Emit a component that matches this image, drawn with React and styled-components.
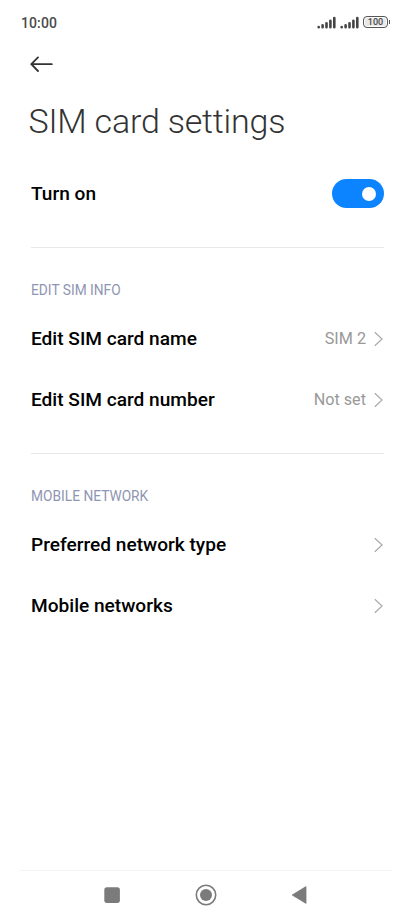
import React from "react";
import styled, { createGlobalStyle } from "styled-components";

const GlobalStyle = createGlobalStyle`
  * { box-sizing: border-box; }
  body { margin: 0; background: #fff; font-family: Roboto, sans-serif; }
`;

const Screen = styled.div`
  width: 414px;
  height: 920px;
  display: flex;
  flex-direction: column;
  background: #fff;
  overflow: hidden;
`;

const StatusBar = styled.header`
  height: 44px;
  padding: 0 24px 0 21px;
  display: flex;
  align-items: center;
  justify-content: space-between;
`;

const Clock = styled.time`
  margin-top: 2px;
  font-size: 14px;
  font-weight: 500;
  line-height: 18px;
  letter-spacing: 0.1px;
  color: #4a4a4a;
`;

const StatusIcons = styled.div`
  display: flex;
  align-items: center;
  gap: 4px;
`;

const Battery = styled.div`
  display: flex;
  align-items: center;
  gap: 1px;
`;

const BatteryBody = styled.span`
  width: 25px;
  height: 12px;
  border: 1px solid #555;
  border-radius: 4px;
  box-shadow: inset 0 0 0 1px #fff;
  background: #e8e8e8;
  color: #4a4a4a;
  font-size: 9px;
  font-weight: 500;
  line-height: 10.5px;
  text-align: center;
`;

const BatteryTip = styled.span`
  width: 1px;
  height: 4px;
  background: #555;
`;

const BackButton = styled.button`
  width: 24px;
  height: 20px;
  margin: 10px 0 0 30px;
  padding: 0;
  border: 0;
  background: none;
  display: flex;
  align-items: center;
`;

const Title = styled.h1`
  margin: 24px 0 0 28.5px;
  font-size: 34px;
  font-weight: 300;
  line-height: 46px;
  letter-spacing: -0.2px;
  color: #333;
  white-space: nowrap;
`;

const Content = styled.main`
  flex: 1;
  padding: 19px 30px 0 31px;
`;

const Row = styled.div`
  height: 61px;
  display: flex;
  align-items: center;
`;

const Label = styled.span`
  flex: 1;
  font-size: 19.1px;
  font-weight: 500;
  line-height: 24px;
  color: #000;
`;

const Value = styled.span`
  margin-right: 8px;
  font-size: 16.2px;
  line-height: 22px;
  color: #999;
`;

const Toggle = styled.button`
  width: 52px;
  height: 29px;
  padding: 0 8px;
  border: 0;
  border-radius: 15px;
  background: #0d84ff;
  display: flex;
  align-items: center;
  justify-content: flex-end;
`;

const Knob = styled.span`
  width: 14px;
  height: 14px;
  border-radius: 50%;
  background: #fff;
`;

const Section = styled.section`
  margin-top: 22.9px;
  border-top: 1px solid #e8e8e8;
  padding-top: 32px;
`;

const SectionTitle = styled.h2`
  margin: 0 0 8.4px;
  font-size: 13.75px;
  font-weight: 400;
  line-height: 20px;
  color: #8f95b2;
`;

const NavBar = styled.nav`
  height: 50px;
  margin: 0 22px 0 20px;
  padding: 0 85px 1px 84px;
  border-top: 1px solid #f4f4f4;
  display: flex;
  align-items: center;
  justify-content: space-between;
`;

const NavButton = styled.button`
  width: 22px;
  height: 22px;
  margin: 0 -3px;
  padding: 0;
  border: 0;
  background: none;
  display: flex;
`;

const Chevron = () => (
  <svg width="10" height="16" viewBox="0 0 10 16" fill="none" stroke="#aaa" strokeWidth="1.2">
    <path d="M.8 1.2l7.3 6.8L.8 14.8" />
  </svg>
);

const Signal = () => (
  <svg width="19" height="13" viewBox="0 0 19 13" fill="none" stroke="#444" strokeWidth="2.6" strokeLinecap="round">
    <path d="M1.7 11.3v-.2M5.6 11.3V9.4M9.5 11.3V7.3M13.4 11.3V4.8M17.3 11.3V2" />
  </svg>
);

export default function App() {
  return (
    <Screen>
      <GlobalStyle />
      <StatusBar>
        <Clock>10:00</Clock>
        <StatusIcons>
          <Signal />
          <Signal />
          <Battery><BatteryBody>100</BatteryBody><BatteryTip /></Battery>
        </StatusIcons>
      </StatusBar>
      <BackButton aria-label="Back">
        <svg width="24" height="16" viewBox="0 0 24 16" fill="none" stroke="#333" strokeWidth="1.8" strokeLinecap="round" strokeLinejoin="round">
          <path d="M21.8 8.2H1.3M8 1.4L1.3 8.2L8 15" />
        </svg>
      </BackButton>
      <Title>SIM card settings</Title>
      <Content>
        <Row><Label>Turn on</Label><Toggle role="switch" aria-checked="true" aria-label="Turn on"><Knob /></Toggle></Row>
        <Section>
          <SectionTitle>EDIT SIM INFO</SectionTitle>
          <Row><Label>Edit SIM card name</Label><Value>SIM 2</Value><Chevron /></Row>
          <Row><Label>Edit SIM card number</Label><Value>Not set</Value><Chevron /></Row>
        </Section>
        <Section>
          <SectionTitle>MOBILE NETWORK</SectionTitle>
          <Row><Label>Preferred network type</Label><Chevron /></Row>
          <Row><Label>Mobile networks</Label><Chevron /></Row>
        </Section>
      </Content>
      <NavBar>
        <NavButton aria-label="Recent apps">
          <svg width="22" height="22" viewBox="0 0 22 22"><rect x="3.3" y="3.3" width="15.6" height="15.6" rx="2.6" fill="#7b7b7b" /></svg>
        </NavButton>
        <NavButton aria-label="Home">
          <svg width="22" height="22" viewBox="0 0 22 22"><circle cx="11" cy="11" r="9.7" fill="none" stroke="#7b7b7b" strokeWidth="1.6" /><circle cx="11" cy="11" r="6" fill="#7b7b7b" /></svg>
        </NavButton>
        <NavButton aria-label="Back">
          <svg width="22" height="22" viewBox="0 0 22 22"><path d="M4.2 11L18 2.6V19.4z" fill="#7b7b7b" stroke="#7b7b7b" strokeWidth="0.8" strokeLinejoin="round" /></svg>
        </NavButton>
      </NavBar>
    </Screen>
  );
}
